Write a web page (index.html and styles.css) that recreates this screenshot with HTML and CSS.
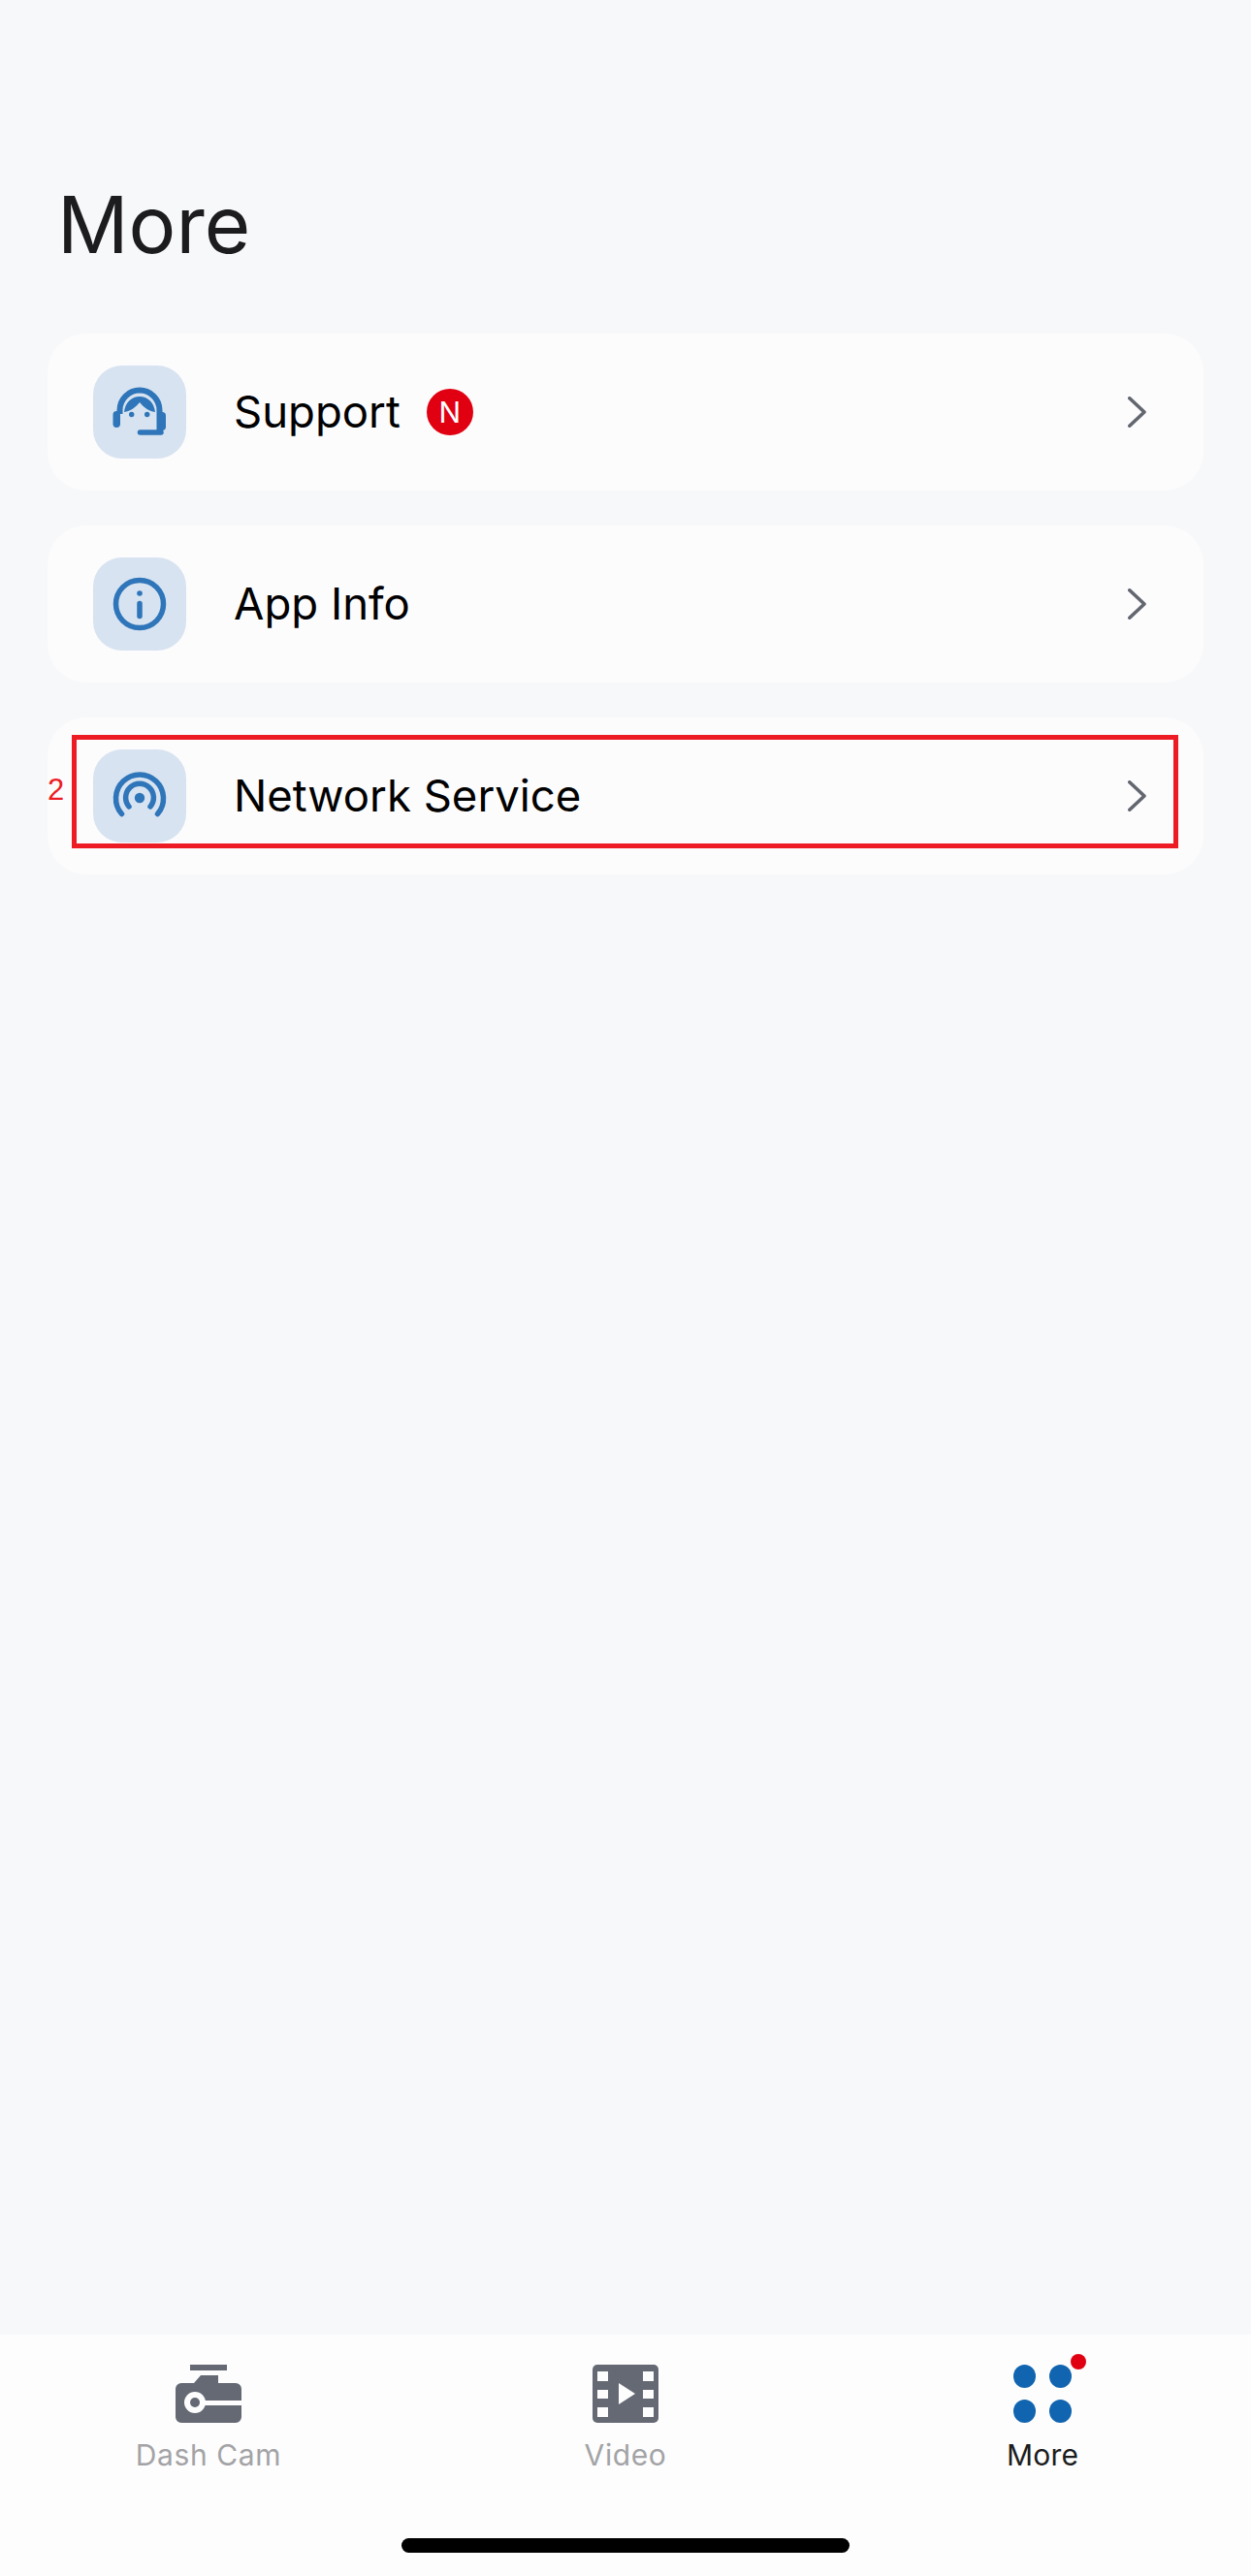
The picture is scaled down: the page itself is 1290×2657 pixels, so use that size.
FILE: index.html
```html
<!DOCTYPE html>
<html lang="en">
<head>
<meta charset="utf-8">
<title>More</title>
<link rel="stylesheet" href="styles.css">
</head>
<body>
<div class="app">
  <main class="content">
    <h1 class="title">More</h1>
    <ul class="menu">
      <li class="card">
        <span class="tile">
          <svg class="tile-svg" viewBox="0 0 96 96">
            <path class="line-head" d="M27.5 50V46A20.5 20.5 0 0 1 68.5 46V69"/>
            <rect class="solid" x="20.5" y="47" width="7.5" height="17" rx="3.7"/>
            <rect class="solid" x="67" y="48" width="8" height="19" rx="3.7"/>
            <path class="solid" d="M32 48C39 47 44 43 48 38C52 43 57 47 64 48C63 38 56 32 48 32C40 32 33 38 32 48Z"/>
            <circle class="solid" cx="39.7" cy="50.5" r="2.7"/>
            <circle class="solid" cx="55.7" cy="50.5" r="2.7"/>
            <path class="line" d="M48.5 69H70"/>
          </svg>
        </span>
        <span class="label">Support</span>
        <span class="badge">N</span>
        <svg class="chevron" viewBox="0 0 19 32"><path d="M1.8 1.8L17 16L1.8 30.2"/></svg>
      </li>
      <li class="card">
        <span class="tile">
          <svg class="tile-svg" viewBox="0 0 96 96">
            <circle class="line" cx="48" cy="48" r="24.5"/>
            <circle class="solid" cx="48" cy="37" r="2.8"/>
            <path class="line" d="M48 47.5V60.5"/>
          </svg>
        </span>
        <span class="label">App Info</span>
        <svg class="chevron" viewBox="0 0 19 32"><path d="M1.8 1.8L17 16L1.8 30.2"/></svg>
      </li>
      <li class="card">
        <span class="mark-num">2</span>
        <span class="mark-box"></span>
        <span class="tile">
          <svg class="tile-svg" viewBox="0 0 96 96">
            <path class="line" d="M29.5 66.5A24.5 24.5 0 1 1 66.5 66.5"/>
            <path class="line" d="M37 59A14.4 14.4 0 1 1 59 59"/>
            <circle class="solid" cx="48" cy="50" r="5.2"/>
          </svg>
        </span>
        <span class="label">Network Service</span>
        <svg class="chevron" viewBox="0 0 19 32"><path d="M1.8 1.8L17 16L1.8 30.2"/></svg>
      </li>
    </ul>
  </main>
  <nav class="tabbar">
    <div class="tabs">
      <div class="tab">
        <svg class="tab-svg" viewBox="0 0 68 60">
          <rect class="grey" x="15" y="0" width="38" height="6"/>
          <path class="grey" d="M26 11H44V19H62A6 6 0 0 1 68 25V54A6 6 0 0 1 62 60H6A6 6 0 0 1 0 54V25A6 6 0 0 1 6 19H19Z"/>
          <rect class="cut" x="20" y="37" width="48" height="5"/>
          <circle class="cut" cx="20" cy="39" r="11"/>
          <circle class="grey" cx="20" cy="39" r="5"/>
        </svg>
        <span class="tab-label">Dash Cam</span>
      </div>
      <div class="tab">
        <svg class="tab-svg" viewBox="0 0 68 60">
          <rect class="grey" x="0" y="0" width="68" height="60" rx="5"/>
          <rect class="cut" x="5" y="7" width="11" height="10"/>
          <rect class="cut" x="5" y="26" width="11" height="9"/>
          <rect class="cut" x="5" y="44" width="11" height="10"/>
          <rect class="cut" x="52" y="7" width="11" height="10"/>
          <rect class="cut" x="52" y="26" width="11" height="9"/>
          <rect class="cut" x="52" y="44" width="11" height="10"/>
          <path class="cut" d="M27 19L44 30L27 41Z"/>
        </svg>
        <span class="tab-label">Video</span>
      </div>
      <div class="tab tab-active">
        <span class="dots">
          <i class="dot"></i><i class="dot"></i><i class="dot"></i><i class="dot"></i>
          <i class="notify"></i>
        </span>
        <span class="tab-label">More</span>
      </div>
    </div>
    <div class="home"></div>
  </nav>
</div>
</body>
</html>
```
FILE: styles.css
```css
* { box-sizing: border-box; }
html, body { margin: 0; padding: 0; }
body {
  background: #f7f8fa;
  font-family: Inter, "Liberation Sans", sans-serif;
  color: #000;
}
.app {
  width: 1290px;
  height: 2657px;
  display: flex;
  flex-direction: column;
}
.content {
  flex: 1;
  padding: 0 49px;
}
.title {
  margin: 0;
  padding: 177px 0 0 10px;
  height: 344px;
  font-size: 81.5px;
  line-height: 110px;
  font-weight: 400;
  color: #1c1c1e;
}
.menu {
  list-style: none;
  margin: 0;
  padding: 0;
  display: flex;
  flex-direction: column;
  gap: 36.5px;
}
.card {
  position: relative;
  height: 161.5px;
  padding: 0 59px 0 47px;
  display: flex;
  align-items: center;
  background: #fcfcfd;
  border-radius: 40px;
}
.tile {
  width: 96px;
  height: 96px;
  flex: none;
  border-radius: 30px;
  background: #d7e3f0;
}
.tile-svg { display: block; width: 96px; height: 96px; }
.line {
  fill: none;
  stroke: #2f75b9;
  stroke-width: 5.5;
  stroke-linecap: round;
}
.line-head {
  fill: none;
  stroke: #2f75b9;
  stroke-width: 6;
}
.solid { fill: #2f75b9; }
.label {
  margin-left: 49px;
  font-size: 45.5px;
  line-height: 56px;
}
.badge {
  width: 48px;
  height: 48px;
  margin-left: 27px;
  border-radius: 50%;
  background: #e00012;
  color: #fff;
  font-size: 30px;
  line-height: 48px;
  text-align: center;
}
.chevron {
  width: 19px;
  height: 32px;
  margin-left: auto;
  fill: none;
  stroke: #62666f;
  stroke-width: 3.6;
  stroke-linecap: round;
  stroke-linejoin: round;
}
.mark-box {
  position: absolute;
  left: 25px;
  top: 18px;
  width: 1141px;
  height: 117px;
  border: 5px solid #ed1c24;
}
.mark-num {
  position: absolute;
  left: 0;
  top: 57px;
  font-family: "Liberation Sans", sans-serif;
  font-size: 31px;
  line-height: 36px;
  color: #ed1c24;
}
.tabbar {
  height: 249px;
  background: #fdfdfd;
  display: flex;
  flex-direction: column;
  align-items: center;
}
.tabs {
  width: 100%;
  display: grid;
  grid-template-columns: repeat(3, 1fr);
  padding-top: 31px;
}
.tab {
  display: flex;
  flex-direction: column;
  align-items: center;
  gap: 15px;
  color: #a3a3a6;
}
.tab-active { color: #1c1c1e; }
.tab-svg { display: block; width: 68px; height: 60px; }
.grey { fill: #646974; }
.cut { fill: #fdfdfd; }
.tab-label {
  font-size: 30px;
  line-height: 36px;
  letter-spacing: 0.6px;
}
.tab-active .tab-label { letter-spacing: 0.2px; }
.dots {
  position: relative;
  width: 60px;
  height: 60px;
  display: grid;
  grid-template-columns: 23px 23px;
  grid-template-rows: 24px 24px;
  justify-content: space-between;
  align-content: space-between;
}
.dot {
  border-radius: 50%;
  background: #1164b0;
}
.notify {
  position: absolute;
  left: 59px;
  top: -11px;
  width: 16px;
  height: 16px;
  border-radius: 50%;
  background: #e00012;
}
.home {
  width: 462px;
  height: 15px;
  margin-top: 68px;
  border-radius: 8px;
  background: #000;
}
```
